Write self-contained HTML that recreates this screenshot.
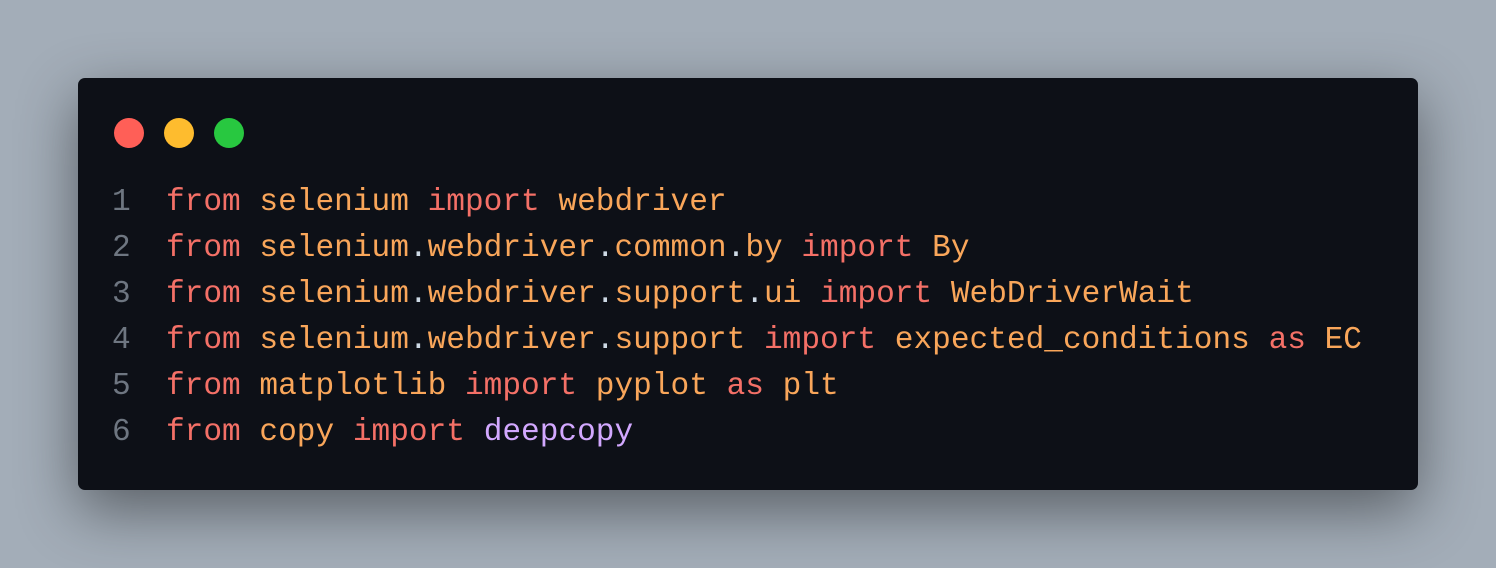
<!DOCTYPE html>
<html><head><meta charset="utf-8"><style>
html,body{margin:0;padding:0}
body{width:1496px;height:568px;background:#a3adb8;position:relative;overflow:hidden;font-family:"Liberation Mono",monospace}
.win{position:absolute;left:78px;top:78px;width:1340px;height:412px;background:#0d1017;border-radius:7px;box-shadow:0 20px 60px rgba(0,0,0,0.45)}
.dot{position:absolute;top:40px;width:30px;height:30px;border-radius:50%}
.line{position:absolute;left:0;height:46px;line-height:46px;font-size:31.15px;white-space:pre;width:1340px}
.n{position:absolute;left:34px;color:#6e7681}
.c{position:absolute;left:88px;color:#f9a65a}
.k{color:#f47067}
.d{color:#cdd9e5}
.p{color:#d2a8ff}
</style></head><body>
<div class="win">
<div class="dot" style="left:36px;background:#ff5f57"></div>
<div class="dot" style="left:86px;background:#febc2e"></div>
<div class="dot" style="left:136px;background:#28c840"></div>
<div class="line" style="top:102px"><span class="n">1</span><span class="c"><span class="k">from</span> selenium <span class="k">import</span> webdriver</span></div>
<div class="line" style="top:148px"><span class="n">2</span><span class="c"><span class="k">from</span> selenium<span class="d">.</span>webdriver<span class="d">.</span>common<span class="d">.</span>by <span class="k">import</span> By</span></div>
<div class="line" style="top:194px"><span class="n">3</span><span class="c"><span class="k">from</span> selenium<span class="d">.</span>webdriver<span class="d">.</span>support<span class="d">.</span>ui <span class="k">import</span> WebDriverWait</span></div>
<div class="line" style="top:240px"><span class="n">4</span><span class="c"><span class="k">from</span> selenium<span class="d">.</span>webdriver<span class="d">.</span>support <span class="k">import</span> expected_conditions <span class="k">as</span> EC</span></div>
<div class="line" style="top:286px"><span class="n">5</span><span class="c"><span class="k">from</span> matplotlib <span class="k">import</span> pyplot <span class="k">as</span> plt</span></div>
<div class="line" style="top:332px"><span class="n">6</span><span class="c"><span class="k">from</span> copy <span class="k">import</span> <span class="p">deepcopy</span></span></div>
</div>
</body></html>
